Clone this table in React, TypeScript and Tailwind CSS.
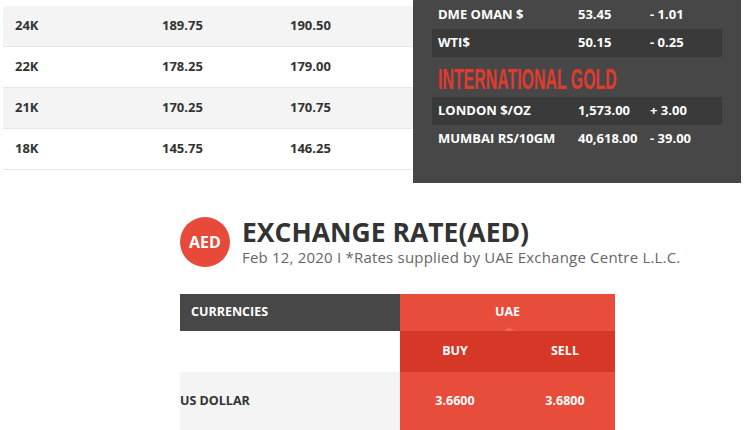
const font = { fontFamily: '"Open Sans", "Liberation Sans", sans-serif' };

const gold = [
  { k: '24K', buy: '189.75', sell: '190.50' },
  { k: '22K', buy: '178.25', sell: '179.00' },
  { k: '21K', buy: '170.25', sell: '170.75' },
  { k: '18K', buy: '145.75', sell: '146.25' },
];

function GoldTable() {
  return (
    <div className="w-[410px] ml-[3px] pt-[6px]">
      {gold.map((r, i) => (
        <div
          key={r.k}
          className={`h-[41px] flex items-center border-b border-[#e6e6e6] text-[13px] font-bold text-[#333] ${
            i % 2 === 0 ? 'bg-[#f4f4f4]' : 'bg-white'
          }`}
        >
          <span className="w-[159px] pl-[12px]">{r.k}</span>
          <span className="w-[128px]">{r.buy}</span>
          <span>{r.sell}</span>
        </div>
      ))}
    </div>
  );
}

function OilRow({ name, price, change, dark }: { name: string; price: string; change: string; dark?: boolean }) {
  return (
    <div className={`h-[28px] flex items-center text-[13px] font-bold text-white ${dark ? 'bg-[#3a3a3a]' : ''}`}>
      <span className="w-[146px] pl-[6px]">{name}</span>
      <span className="w-[72px]">{price}</span>
      <span>{change}</span>
    </div>
  );
}

function DarkPanel() {
  return (
    <div className="w-[328px] h-[183px] bg-[#474747] px-[19px] pt-[1px]">
      <OilRow name="DME OMAN $" price="53.45" change="- 1.01" />
      <OilRow name="WTI$" price="50.15" change="- 0.25" dark />
      <div className="h-[40px] flex items-end pb-[3px] pl-[6px]">
        <span
          className="inline-block origin-left scale-x-[0.53] text-[30px] font-bold leading-none text-[#e23a2f] whitespace-nowrap"
          style={{ fontFamily: '"Liberation Sans", sans-serif' }}
        >
          INTERNATIONAL GOLD
        </span>
      </div>
      <OilRow name="LONDON $/OZ" price="1,573.00" change="+ 3.00" dark />
      <OilRow name="MUMBAI RS/10GM" price="40,618.00" change="- 39.00" />
    </div>
  );
}

function ExchangeHeader() {
  return (
    <div className="flex items-center gap-[12px] ml-[180px] mt-[34px]">
      <div className="w-[50px] h-[50px] rounded-full bg-[#e84a3a] flex items-center justify-center text-white text-[16px] font-bold">
        AED
      </div>
      <div className="flex flex-col">
        <div className="text-[26.5px] font-bold text-[#333] leading-[30px]">EXCHANGE RATE(AED)</div>
        <div className="text-[15px] text-[#666] leading-[20px] tracking-[0.2px]">
          Feb 12, 2020 I *Rates supplied by UAE Exchange Centre L.L.C.
        </div>
      </div>
    </div>
  );
}

function RateTable() {
  return (
    <div className="ml-[180px] mt-[27px] w-[435px] text-[12.5px] font-bold">
      <div className="flex h-[37px]">
        <div className="w-[220px] bg-[#474747] text-white flex items-center pl-[11px]">CURRENCIES</div>
        <div className="relative flex-1 bg-[#e84c3a] text-white flex items-center justify-center">
          UAE
          <div className="absolute bottom-0 left-[104px] w-0 h-0 border-l-[5px] border-r-[5px] border-b-[4px] border-l-transparent border-r-transparent border-b-[#ee6656]" />
        </div>
      </div>
      <div className="flex h-[41px]">
        <div className="w-[220px] bg-white" />
        <div className="flex-1 bg-[#d63727] text-white flex items-center">
          <span className="w-[110px] text-center">BUY</span>
          <span className="flex-1 text-center pl-[5px]">SELL</span>
        </div>
      </div>
      <div className="flex h-[58px]">
        <div className="w-[220px] bg-[#f4f4f4] text-[#333] flex items-center">US DOLLAR</div>
        <div className="flex-1 bg-[#e84c3a] text-white flex items-center">
          <span className="w-[110px] text-center">3.6600</span>
          <span className="flex-1 text-center pl-[5px]">3.6800</span>
        </div>
      </div>
    </div>
  );
}

export default function App() {
  return (
    <div className="w-[750px] h-[430px] overflow-hidden bg-white" style={font}>
      <div className="flex">
        <GoldTable />
        <DarkPanel />
      </div>
      <ExchangeHeader />
      <RateTable />
    </div>
  );
}
